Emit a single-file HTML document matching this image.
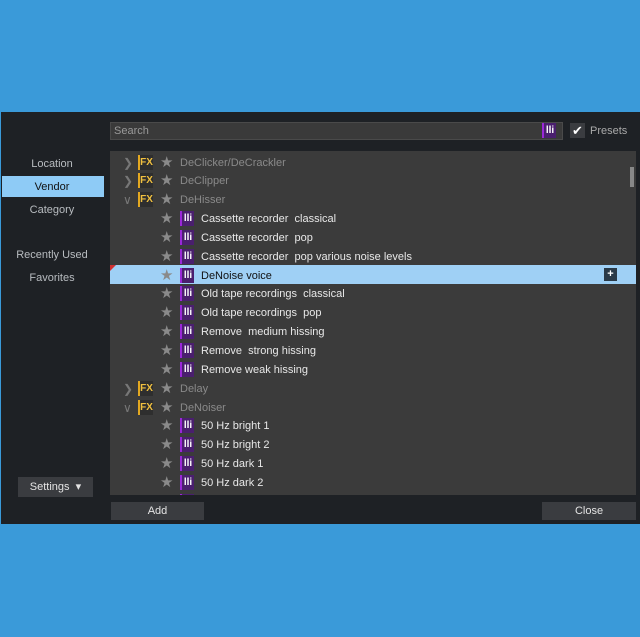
<!DOCTYPE html>
<html><head><style>
body{margin:0;width:640px;height:637px;background:#3a9ad9;position:relative;overflow:hidden;font-family:"Liberation Sans",sans-serif;}
.p{position:absolute;left:1px;top:112px;width:639px;height:412px;background:#1e2125;}
.a{position:absolute;white-space:pre}
.nav{position:absolute;left:0;width:104px;text-align:center;color:#b8bcc0;font-size:11px}
.list{position:absolute;left:110px;top:151px;width:526px;height:344px;background:#3b3b3b;overflow:hidden}
.r{position:absolute;left:0;width:526px;height:19px;font-size:11px;line-height:21px}
.star{position:absolute;color:#8a8a8a;font-size:15px;line-height:20px}
.fx{position:absolute;width:13px;height:15px;top:2px;border-left:2px solid #e3a820;color:#f0c040;font-weight:bold;font-size:10px;line-height:15px;text-align:center;background:#2e2e2e}
.pi{position:absolute;width:12px;height:15px;top:2px;border-left:2px solid #9a28d8;background:#4a1f6e;color:#fff;font-weight:bold;font-size:10px;line-height:15px;text-align:center}
.chev{position:absolute;color:#777;font-size:12px}
.btn{position:absolute;background:#3a3c40;color:#e4e4e4;font-size:11px;text-align:center}
</style></head><body>
<div class="p"></div>
<div class="a" style="left:110px;top:122px;width:453px;height:18px;background:#3a3a3a;border:1px solid #4a4a4a;box-sizing:border-box;color:#999;font-size:11px;line-height:17px;padding-left:3px">Search</div>
<div class="a pi" style="left:542px;top:123px">lli</div>
<div class="a" style="left:570px;top:123px;width:15px;height:15px;background:#3a3c40;color:#fff;font-size:13px;line-height:15px;text-align:center">✔</div>
<div class="a" style="left:590px;top:125px;color:#aaa;font-size:11px">Presets</div>
<div class="nav" style="top:158px">Location</div>
<div class="a" style="left:2px;top:176px;width:102px;height:21px;background:#8ecbf6"></div>
<div class="nav" style="top:181px;color:#111">Vendor</div>
<div class="nav" style="top:204px">Category</div>
<div class="nav" style="top:249px">Recently Used</div>
<div class="nav" style="top:272px">Favorites</div>
<div class="btn" style="left:18px;top:477px;width:75px;height:20px;line-height:21px">Settings &nbsp;▾</div>
<div class="btn" style="left:111px;top:502px;width:93px;height:18px;line-height:19px">Add</div>
<div class="btn" style="left:542px;top:502px;width:94px;height:18px;line-height:19px">Close</div>
<div class="list">
<div class="a" style="left:520px;top:16px;width:4px;height:20px;background:#888"></div>
<div class="r" style="top:114px;background:#9fd0f5"></div>
<div class="a" style="left:494px;top:117px;width:13px;height:13px;background:#2a3a48;color:#fff;font-size:11px;line-height:13px;text-align:center;font-weight:bold">+</div>
<div class="a" style="left:0;top:114px;width:0;height:0;border-top:6px solid #d03030;border-right:6px solid transparent"></div>
</div>
<div id="rows" class="list" style="background:transparent"></div>
<script>
var rows=[["g","DeClicker/DeCrackler",">"],["g","DeClipper",">"],["g","DeHisser","v"],["p","Cassette recorder  classical"],["p","Cassette recorder  pop"],["p","Cassette recorder  pop various noise levels"],["p","DeNoise voice"],["p","Old tape recordings  classical"],["p","Old tape recordings  pop"],["p","Remove  medium hissing"],["p","Remove  strong hissing"],["p","Remove weak hissing"],["g","Delay",">"],["g","DeNoiser","v"],["p","50 Hz bright 1"],["p","50 Hz bright 2"],["p","50 Hz dark 1"],["p","50 Hz dark 2"],["p",""]];
var h="";rows.forEach(function(r,i){var t=1.5+i*18.85;
if(r[0]=="g"){h+='<div class="r" style="top:'+t+'px"><span class="chev" style="left:13px">'+(r[2]==">"?"&#x276F;":"&#x2228;")+'</span><span class="fx" style="left:28px">FX</span><span class="star" style="left:50px">★</span><span class="a" style="left:70px;color:#8a8a8a">'+r[1]+'</span></div>';}
else{h+='<div class="r" style="top:'+t+'px"><span class="star" style="left:50px">★</span><span class="pi" style="left:70px">lli</span><span class="a" style="left:91px;color:'+(i==6?'#111':'#e8e8e8')+'">'+r[1]+'</span></div>';}});
document.getElementById("rows").innerHTML=h;
</script>
</body></html>
